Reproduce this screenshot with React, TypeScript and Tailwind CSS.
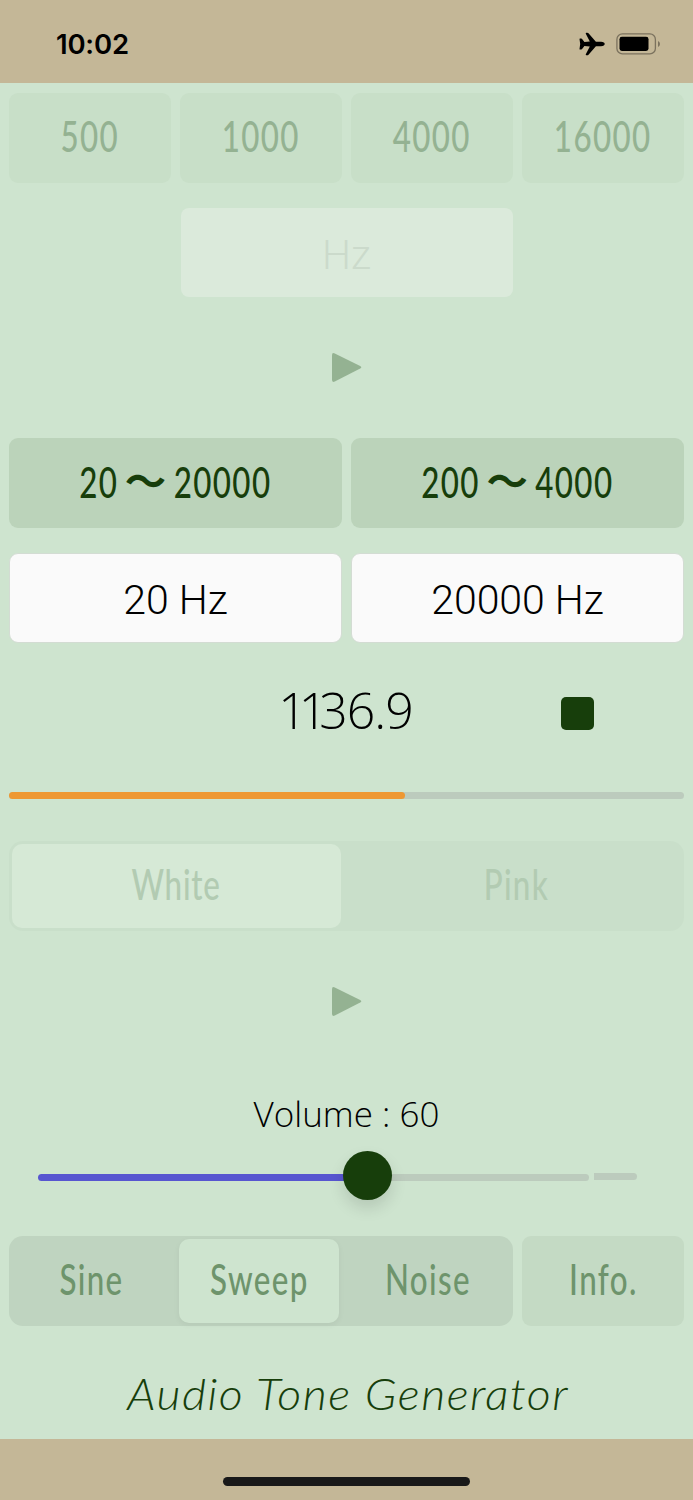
import React from 'react';

interface LabelProps {
  children: React.ReactNode;
  className?: string;
}

// Condensed label shared by all buttons and segments
const Label: React.FC<LabelProps> = ({ children, className = '' }) => (
  <span
    className={`mb-[2px] inline-block whitespace-nowrap scale-x-[0.755] font-['Lato',sans-serif] text-[41.5px] leading-none font-medium tracking-[1.8px] ${className}`}
  >
    {children}
  </span>
);

const presets = ['500', '1000', '4000', '16000'];

const ranges = [
  { from: '20', to: '20000' },
  { from: '200', to: '4000' },
];

const limits = ['20 Hz', '20000 Hz'];

const PlayIcon: React.FC = () => (
  <svg width="31" height="31" viewBox="0 0 31 31" fill="#94b292">
    <path d="M1 3.2Q1 .2 3.8 1.5L29.2 14Q31.4 15.3 29.2 16.6L3.8 29.5Q1 30.8 1 27.8Z" />
  </svg>
);

const StatusBar: React.FC = () => (
  <div className="flex h-[83px] items-center justify-between bg-[#c4b797] pt-[5px] pr-[32px] pl-[56px]">
    <div className="pt-[2px] font-['Inter',sans-serif] text-[27.5px] leading-none font-semibold tracking-[-0.2px] text-black">
      10:02
    </div>
    <div className="flex items-center gap-[11px]">
      <svg width="26" height="24" viewBox="0 0 26 24" fill="#000">
        <path d="M1 6.6h1.3q.5 0 .8.4l2.3 3 5.4-.4L6.8 1.8Q6.4.7 7.5.7h.8q.7 0 1.2.6l7.4 8.5h5.1q3.7.3 3.7 2.2t-3.7 2.2h-5.1l-7.4 8.5q-.5.6-1.2.6h-.8q-1.1 0-.7-1.1l4-7.8-5.4-.4-2.3 3q-.3.4-.8.4H1q-.5 0-.5-.5l.7-4.9L.5 7.1Q.5 6.6 1 6.6Z" />
      </svg>
      <svg width="45" height="22" viewBox="0 0 45 22">
        <rect x=".9" y=".9" width="38.5" height="20" rx="5.5" fill="none" stroke="#7b725e" strokeWidth="1.3" />
        <rect x="3.5" y="3.8" width="29" height="14.2" rx="2.4" fill="#000" />
        <path d="M42 8q2 .8 2 3t-2 3Z" fill="#7b725e" />
      </svg>
    </div>
  </div>
);

const App: React.FC = () => {
  return (
    <div className="flex h-[1500px] w-[693px] flex-col overflow-hidden bg-[#cee4cf]">
      <StatusBar />

      <div className="flex flex-1 flex-col px-[9px]">
        {/* Fixed tones */}
        <div className="mt-[9.5px] grid grid-cols-4 gap-[9px]">
          {presets.map((tone) => (
            <button key={tone} className="flex h-[90px] items-center justify-center rounded-[9px] bg-[#c8dfc8]">
              <Label className="text-[#94b292]">{tone}</Label>
            </button>
          ))}
        </div>

        <div className="mx-auto mt-[25.5px] flex h-[89px] w-[332px] items-center justify-center rounded-[8px] bg-[#dbeadb] pt-[6px] font-['Roboto',sans-serif] text-[41px] font-light text-[#cbdacb]">
          Hz
        </div>

        <button className="mx-auto mt-[55px] block h-[31px]">
          <PlayIcon />
        </button>

        {/* Sweep ranges */}
        <div className="mt-[54.5px] grid grid-cols-2 gap-[9px]">
          {ranges.map((range) => (
            <button
              key={range.to}
              className="flex h-[90px] items-center justify-center rounded-[9px] bg-[#bbd3ba] text-[#173e0b]"
            >
              <Label>
                {range.from}
                <span className="relative -top-px mr-[17px] ml-[15px] inline-block scale-x-[1.32] font-['Noto_Sans_CJK_JP',sans-serif] leading-none font-bold tracking-normal">
                  〜
                </span>
                {range.to}
              </Label>
            </button>
          ))}
        </div>

        <div className="mt-[25.5px] grid grid-cols-2 gap-[9px]">
          {limits.map((limit) => (
            <div
              key={limit}
              className="flex h-[90px] items-center justify-center rounded-[9px] border border-[#d3dcd3] bg-[#fafafa] pt-[5px] font-['Roboto',sans-serif] text-[41px] font-light text-black"
            >
              {limit}
            </div>
          ))}
        </div>

        {/* Current frequency */}
        <div className="mt-[34px] grid h-[72px] grid-cols-[1fr_auto_1fr] items-center">
          <span />
          <span className="mr-[2px] mb-[6px] font-['Open_Sans',sans-serif] text-[50px] leading-none font-light tracking-[-1px] text-black">
            <span className="tracking-[-8px]">11</span>36.9
          </span>
          <button className="mr-[90px] size-[33px] justify-self-end rounded-[5px] bg-[#173e0b]" />
        </div>

        <div className="mt-[43px] h-[7px] rounded-full bg-[#bccbbd]">
          <div className="h-full w-[396px] rounded-full bg-[#ee9833]" />
        </div>

        {/* Noise type */}
        <div className="mt-[42px] grid h-[90px] grid-cols-2 rounded-[14px] bg-[#c9dfca] p-[3px] text-[#b2cbb2]">
          <div className="mr-[6px] flex items-center justify-center rounded-[10px] bg-[#d6e9d6]">
            <Label className="tracking-[1px]">White</Label>
          </div>
          <div className="flex items-center justify-center pl-[5px]">
            <Label>Pink</Label>
          </div>
        </div>

        <button className="mx-auto mt-[55px] block h-[31px]">
          <PlayIcon />
        </button>

        {/* Volume */}
        <div className="mt-[78px] text-center font-['Open_Sans',sans-serif] text-[35px] leading-[38px] font-light text-black">
          Volume : 60
        </div>

        <div className="mt-[20px] ml-[29px] flex h-[49px] items-center">
          <div className="h-[7px] w-[310px] rounded-l-full bg-[#5755d0]" />
          <div className="z-10 -mx-[5px] size-[49px] -translate-y-[2px] rounded-full bg-[#173e0b] shadow-[0_8px_16px_rgba(0,0,0,0.12)]" />
          <div className="h-[7px] w-[202px] rounded-r-full bg-[#bccbbd]" />
          <div className="ml-[5px] h-[7px] w-[43px] -translate-y-px rounded-r-full bg-[#bccbbd]" />
        </div>

        {/* Mode */}
        <div className="mt-[34px] flex gap-[9px] text-[#6e946c]">
          <div className="grid h-[90px] w-[504px] grid-cols-[170px_160px_1fr] rounded-[14px] bg-[#bfd4c0] py-[3px]">
            <div className="flex items-center justify-center pr-[5px]">
              <Label>Sine</Label>
            </div>
            <div className="flex items-center justify-center rounded-[10px] bg-[#cee4cf] shadow-[0_2px_6px_rgba(0,0,0,0.05)]">
              <Label>Sweep</Label>
            </div>
            <div className="flex items-center justify-center pl-[4px]">
              <Label>Noise</Label>
            </div>
          </div>
          <button className="flex h-[90px] flex-1 items-center justify-center rounded-[9px] bg-[#c4dac4]">
            <Label>Info.</Label>
          </button>
        </div>

        <h1 className="mt-[43px] scale-x-[1.06] pl-[3px] text-center font-['Lato',sans-serif] text-[44px] leading-[48px] font-light tracking-[1.4px] whitespace-nowrap text-[#173e0b] italic">
          Audio Tone Generator
        </h1>
      </div>

      {/* Home indicator */}
      <div className="flex h-[61px] items-end justify-center bg-[#c4b797] pb-[14.5px]">
        <div className="h-[9px] w-[247px] rounded-full bg-[#191919]" />
      </div>
    </div>
  );
};

export default App;
